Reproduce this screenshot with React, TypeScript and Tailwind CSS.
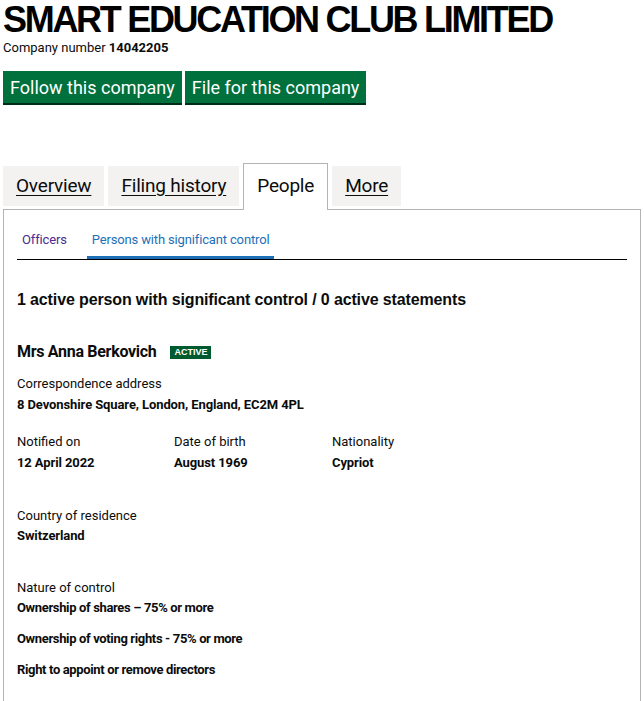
import React from 'react'

const body = { fontFamily: 'Roboto, "Noto Sans", sans-serif' }
const arial = { fontFamily: '"Liberation Sans", Arial, sans-serif' }

const tabs = [
  { title: 'Overview', active: false },
  { title: 'Filing history', active: false },
  { title: 'People', active: true },
  { title: 'More', active: false },
]

function Field({ label, value }: { label: string; value: string }) {
  return (
    <div>
      <div className="text-[13px] leading-[20px] text-[#0b0c0c]">{label}</div>
      <div className="mt-px text-[13px] font-bold leading-[20px] tracking-[-0.1px] text-[#0b0c0c]">{value}</div>
    </div>
  )
}

export default function App() {
  return (
    <div className="min-h-[701px] bg-white px-[3px] text-[#0b0c0c]" style={body}>
      <h1
        className="whitespace-nowrap text-[36px] font-bold leading-[40px] tracking-[-2.3px] text-black"
        style={arial}
      >
        SMART EDUCATION CLUB LIMITED
      </h1>
      <p className="text-[13px] leading-[16px]">
        Company number <strong>14042205</strong>
      </p>

      <div className="mt-[15px] flex gap-[3px]">
        <a className="flex h-[32px] items-center bg-[#00703c] px-[7px] text-[18px] text-white shadow-[0_2px_0_#002d18]">
          Follow this company
        </a>
        <a className="flex h-[32px] items-center bg-[#00703c] px-[7px] text-[18px] text-white shadow-[0_2px_0_#002d18]">
          File for this company
        </a>
      </div>

      <div className="mt-[60px] flex items-end gap-[4px]">
        {tabs.map((tab) =>
          tab.active ? (
            <div
              key={tab.title}
              className="relative z-10 -mb-px flex h-[47px] items-center border border-b-0 border-[#b1b4b6] bg-white px-[13px] pb-[4px] pt-[3px] text-[19px] tracking-[-0.2px]"
            >
              {tab.title}
            </div>
          ) : (
            <a
              key={tab.title}
              className="mb-[3px] flex h-[40px] items-center bg-[#f3f2f1] px-[13px] text-[19px] tracking-[-0.2px] underline underline-offset-[3px]"
            >
              {tab.title}
            </a>
          )
        )}
      </div>

      <div className="border border-[#b1b4b6] px-[13px] pb-[40px] pt-[21px]">
        <ul className="flex gap-[15px] border-b border-black text-[13px] leading-[18px] tracking-[-0.15px]">
          <li className="border-b-[3px] border-transparent px-[5px] pb-[7px] text-[#4c2c92]">Officers</li>
          <li className="border-b-[3px] border-[#1d70b8] px-[5px] pb-[7px] text-[#1d70b8]">
            Persons with significant control
          </li>
        </ul>

        <h2 className="mt-[30px] text-[16px] font-bold leading-[20px] tracking-[-0.13px]" style={arial}>
          1 active person with significant control / 0 active statements
        </h2>

        <div className="mt-[32px] flex items-center gap-[14px]">
          <span className="text-[16px] font-bold leading-[20px] tracking-[-0.3px]">Mrs Anna Berkovich</span>
          <span
            className="flex h-[13px] items-center bg-[#005a30] px-[4px] text-[9px] font-bold leading-none text-white"
            style={arial}
          >
            ACTIVE
          </span>
        </div>

        <div className="mt-[12px]">
          <Field label="Correspondence address" value="8 Devonshire Square, London, England, EC2M 4PL" />
        </div>

        <div className="mt-[17px] grid grid-cols-[157px_158px_1fr]">
          <Field label="Notified on" value="12 April 2022" />
          <Field label="Date of birth" value="August 1969" />
          <Field label="Nationality" value="Cypriot" />
        </div>

        <div className="mt-[33px]">
          <div className="text-[13px] leading-[20px]">Country of residence</div>
          <div className="text-[13px] font-bold leading-[20px] tracking-[-0.1px]">Switzerland</div>
        </div>

        <div className="mt-[32px] text-[13px] leading-[20px]">
          <div>Nature of control</div>
          <div className="font-bold tracking-[-0.35px]">Ownership of shares – 75% or more</div>
          <div className="mt-[11px] font-bold tracking-[-0.35px]">Ownership of voting rights - 75% or more</div>
          <div className="mt-[11px] font-bold tracking-[-0.35px]">Right to appoint or remove directors</div>
        </div>
      </div>
    </div>
  )
}
